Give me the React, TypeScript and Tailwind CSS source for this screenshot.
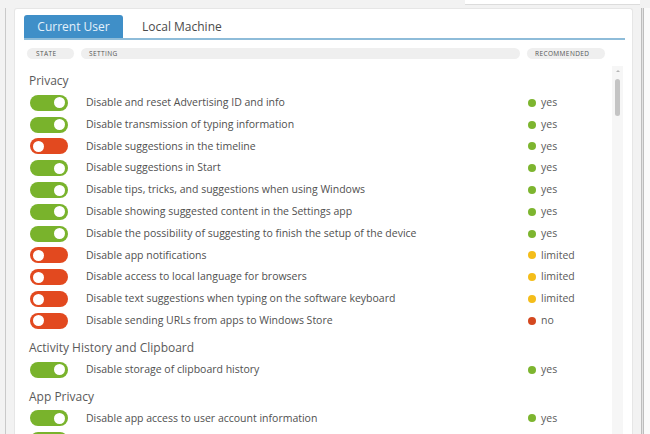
import clsx from 'clsx'

type Rec = 'yes' | 'limited' | 'no'
type Row = { label: string; on: boolean; rec: Rec }
type Section = { title: string; rows: Row[] }

const sections: Section[] = [
  {
    title: 'Privacy',
    rows: [
      { label: 'Disable and reset Advertising ID and info', on: true, rec: 'yes' },
      { label: 'Disable transmission of typing information', on: true, rec: 'yes' },
      { label: 'Disable suggestions in the timeline', on: false, rec: 'yes' },
      { label: 'Disable suggestions in Start', on: true, rec: 'yes' },
      { label: 'Disable tips, tricks, and suggestions when using Windows', on: true, rec: 'yes' },
      { label: 'Disable showing suggested content in the Settings app', on: true, rec: 'yes' },
      { label: 'Disable the possibility of suggesting to finish the setup of the device', on: true, rec: 'yes' },
      { label: 'Disable app notifications', on: false, rec: 'limited' },
      { label: 'Disable access to local language for browsers', on: false, rec: 'limited' },
      { label: 'Disable text suggestions when typing on the software keyboard', on: false, rec: 'limited' },
      { label: 'Disable sending URLs from apps to Windows Store', on: false, rec: 'no' },
    ],
  },
  {
    title: 'Activity History and Clipboard',
    rows: [{ label: 'Disable storage of clipboard history', on: true, rec: 'yes' }],
  },
  {
    title: 'App Privacy',
    rows: [
      { label: 'Disable app access to user account information', on: true, rec: 'yes' },
      // next row is scrolled just below the fold, only its toggle peeks in
      { label: '', on: true, rec: 'yes' },
    ],
  },
]

const dotColor: Record<Rec, string> = {
  yes: 'bg-[#7db52f]',
  limited: 'bg-[#f4bd1a]',
  no: 'bg-[#d4481f]',
}

function Toggle({ on }: { on: boolean }) {
  return (
    <div
      className={clsx(
        'flex h-[16px] w-[38px] items-center rounded-full px-[3px]',
        on ? 'justify-end bg-[#79b32c]' : 'justify-start bg-[#e2491f]',
      )}
    >
      <div className="h-[11px] w-[11px] rounded-full bg-white" />
    </div>
  )
}

function Pill({ children, className }: { children: string; className?: string }) {
  return (
    <div
      className={clsx(
        'flex h-[11px] items-center rounded-full bg-[#efefef] text-[6.5px] tracking-[0.4px] text-[#555]',
        className,
      )}
    >
      {children}
    </div>
  )
}

export default function App() {
  return (
    <div
      className="flex h-[434px] w-[650px] flex-col overflow-hidden bg-[#f2f2f2]"
      style={{ fontFamily: '"Open Sans", "Noto Sans", sans-serif' }}
    >
      <div className="flex h-[8px] shrink-0 pr-[10px]">
        <div className="ml-auto h-[5px] w-[175px] border-b border-[#dcdcdc] bg-white" />
      </div>
      <div className="flex min-h-0 flex-1">
        <div className="ml-[5px] w-[9px] shrink-0 border-l border-[#c9c9c9]" />
        <div className="flex min-h-0 w-[619px] flex-col rounded-t-[3px] border border-b-0 border-[#e6e6e6] bg-white">
          {/* tabs */}
          <div className="ml-[9px] mr-[7px] mt-[6px] flex border-b-2 border-[#8ebcd9]">
            <div className="flex h-[23px] w-[99px] items-center justify-center rounded-t-[3px] bg-[#3f8fc8] text-[12px] text-[#e4f1fb]">
              Current User
            </div>
            <div className="flex h-[23px] items-center pl-[19px] text-[12px] text-[#4a4a4a]">Local Machine</div>
          </div>
          {/* column headers */}
          <div className="ml-[12px] mt-[8px] flex gap-[7px]">
            <Pill className="w-[47px] pl-[9px]">STATE</Pill>
            <Pill className="w-[439px] pl-[8px]">SETTING</Pill>
            <Pill className="w-[78px] pl-[8px]">RECOMMENDED</Pill>
          </div>
          {/* list */}
          <div className="mt-[6px] flex min-h-0 flex-1">
            <div className="flex-1 pl-[14px]">
              {sections.map((s) => (
                <div key={s.title}>
                  <div className="flex h-[27px] items-center pt-[5px] text-[12px] text-[#5a5a5a]">{s.title}</div>
                  {s.rows.map((r, j) => (
                    <div key={j} className="flex h-[21.8px] items-center">
                      <div className="w-[57px] shrink-0 pl-[1px]">
                        <Toggle on={r.on} />
                      </div>
                      <div className="flex-1 truncate text-[10.5px] text-[#505050]">{r.label}</div>
                      {r.label && (
                        <div className="flex w-[93px] shrink-0 items-center gap-[5px] pl-[9px] text-[10.5px] text-[#5a5a5a]">
                          <div className={clsx('h-[8px] w-[8px] rounded-full', dotColor[r.rec])} />
                          {r.rec}
                        </div>
                      )}
                    </div>
                  ))}
                </div>
              ))}
            </div>
            <div className="mr-[9px] mt-[1px] flex w-[11px] flex-col items-center bg-[#f6f6f6]">
              <div className="mt-[4px] h-0 w-0 border-x-[2px] border-b-[2px] border-x-transparent border-b-[#b5b5b5]" />
              <div className="mt-[7px] h-[37px] w-[5px] rounded-full bg-[#c4c4c4]" />
            </div>
          </div>
        </div>
        <div className="w-[8px] shrink-0" />
        <div className="w-[3px] shrink-0 border-x border-[#bdbdbd] bg-[#e2e2e2]" />
        <div className="flex-1 bg-[#fafafa]" />
      </div>
    </div>
  )
}
